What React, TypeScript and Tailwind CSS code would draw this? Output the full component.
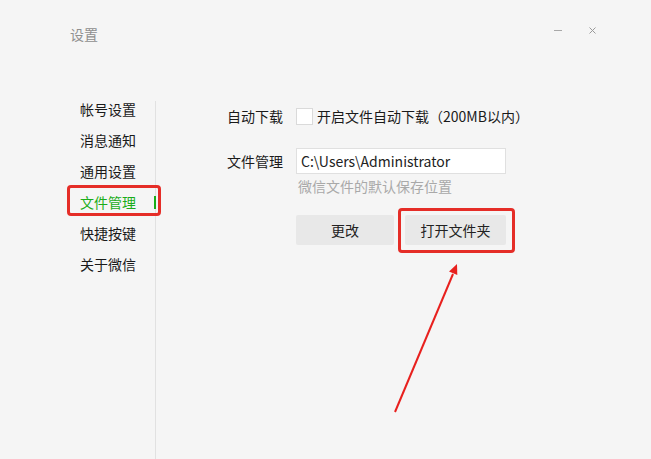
import React from "react";

const MENU = ["帐号设置", "消息通知", "通用设置", "文件管理", "快捷按键", "关于微信"];
const ACTIVE = "文件管理";

export default function App() {
  return (
    <div className="relative w-[651px] h-[459px] overflow-hidden bg-[#f5f5f5] font-['Noto_Sans_CJK_SC',sans-serif] text-[14px] text-[#1a1a1a]">
      {/* title bar */}
      <div className="flex h-[94px] pl-[70px] pr-[55px] pt-[21px]">
        <div className="mt-[4px] leading-[18px] text-[#8f8f8f]">设置</div>
        <div className="ml-auto flex h-[18px] items-center gap-[27px]">
          <span className="block w-[8px] h-px bg-[#a8a8a8]" />
          <svg width="7" height="7" viewBox="0 0 7 7" className="text-[#9a9a9a]">
            <path d="M0.5 0.5 L6.5 6.5 M6.5 0.5 L0.5 6.5" stroke="currentColor" strokeWidth="1" />
          </svg>
        </div>
      </div>

      <div className="flex h-[365px]">
        {/* side menu */}
        <div className="flex w-[155px] flex-col">
          {MENU.map((m) => (
            <div
              key={m}
              className={
                m === ACTIVE
                  ? "relative flex h-[31px] items-center pl-[80px] text-[#1aad19]"
                  : "flex h-[31px] items-center pl-[80px]"
              }
            >
              {m}
              {m === ACTIVE && <span className="absolute right-[-1px] top-[9px] h-[13px] w-[2px] bg-[#1aad19]" />}
            </div>
          ))}
        </div>
        <div className="mt-[7px] w-px bg-[#e1e1e1]" />

        {/* content */}
        <div className="flex flex-col pl-[71px] pt-[14px]">
          <div className="flex h-[17px] items-center">
            <span className="w-[69px] leading-[17px]">自动下载</span>
            <span className="block h-[17px] w-[17px] border border-[#dadada] bg-white" />
            <span className="ml-[4px] leading-[17px]">开启文件自动下载（200MB以内）</span>
          </div>

          <div className="mt-[23px] flex h-[26px] items-center">
            <span className="w-[69px]">文件管理</span>
            <div className="flex h-[26px] w-[210px] items-center border border-[#e0e0e0] bg-white pl-[4px] text-[#222]">
              C:\Users\Administrator
            </div>
          </div>
          <div className="mt-[4px] pl-[71px] leading-[16px] text-[#a9a9a9]">微信文件的默认保存位置</div>

          <div className="mt-[21px] flex gap-[11px] pl-[69px]">
            <button className="h-[30px] w-[98px] rounded-[2px] bg-[#e8e8e8] text-[#222]">更改</button>
            <button className="h-[30px] w-[101px] rounded-[2px] bg-[#e8e8e8] text-[#222]">打开文件夹</button>
          </div>
        </div>
      </div>

      {/* annotation marks */}
      <div className="absolute left-[67px] top-[185px] h-[31px] w-[94px] rounded-[4px] border-[3px] border-[#e52d27]" />
      <div className="absolute left-[398px] top-[208px] h-[45px] w-[117px] rounded-[4px] border-[3px] border-[#e52d27]" />
      <svg className="absolute left-0 top-0" width="651" height="459" viewBox="0 0 651 459">
        <line x1="395" y1="412" x2="453" y2="274" stroke="#e8201e" strokeWidth="2" />
        <polygon points="457,264 457.3,275 449,271.5" fill="#e8201e" />
      </svg>
    </div>
  );
}
